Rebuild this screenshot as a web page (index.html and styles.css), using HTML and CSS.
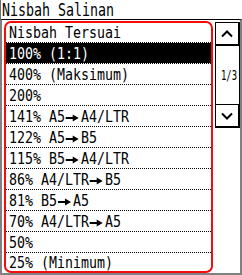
FILE: index.html
```html
<!DOCTYPE html>
<html>
<head>
<meta charset="utf-8">
<link rel="stylesheet" href="styles.css">
</head>
<body>
<div class="screen">
  <div class="title"><span class="tt">Nisbah Salinan</span></div>
  <div class="main">
    <div class="list">
      <div class="row head"><span class="t">Nisbah Tersuai</span></div>
      <div class="row sel"><span class="t">100% (1:1)</span></div>
      <div class="row"><span class="t">400% (Maksimum)</span></div>
      <div class="row"><span class="t">200%</span></div>
      <div class="row"><span class="t">141% A5<svg class="arr" width="18.7" height="8" viewBox="0 0 16 8" preserveAspectRatio="none"><path d="M1 3h8v2H1z M8 0.5l6 3.5-6 3.5z"/></svg>A4/LTR</span></div>
      <div class="row"><span class="t">122% A5<svg class="arr" width="18.7" height="8" viewBox="0 0 16 8" preserveAspectRatio="none"><path d="M1 3h8v2H1z M8 0.5l6 3.5-6 3.5z"/></svg>B5</span></div>
      <div class="row"><span class="t">115% B5<svg class="arr" width="18.7" height="8" viewBox="0 0 16 8" preserveAspectRatio="none"><path d="M1 3h8v2H1z M8 0.5l6 3.5-6 3.5z"/></svg>A4/LTR</span></div>
      <div class="row"><span class="t">86% A4/LTR<svg class="arr" width="18.7" height="8" viewBox="0 0 16 8" preserveAspectRatio="none"><path d="M1 3h8v2H1z M8 0.5l6 3.5-6 3.5z"/></svg>B5</span></div>
      <div class="row"><span class="t">81% B5<svg class="arr" width="18.7" height="8" viewBox="0 0 16 8" preserveAspectRatio="none"><path d="M1 3h8v2H1z M8 0.5l6 3.5-6 3.5z"/></svg>A5</span></div>
      <div class="row"><span class="t">70% A4/LTR<svg class="arr" width="18.7" height="8" viewBox="0 0 16 8" preserveAspectRatio="none"><path d="M1 3h8v2H1z M8 0.5l6 3.5-6 3.5z"/></svg>A5</span></div>
      <div class="row"><span class="t">50%</span></div>
      <div class="row last"><span class="t">25% (Minimum)</span></div>
    </div>
    <div class="scroll">
      <div class="btn"><svg width="12" height="8" viewBox="0 0 12 8"><path d="M1 6.5 6 1.5l5 5" fill="none" stroke="#000" stroke-width="2"/></svg></div>
      <div class="track"><span class="pg">1/3</span></div>
      <div class="btn"><svg width="12" height="8" viewBox="0 0 12 8"><path d="M1 1.5 6 6.5l5-5" fill="none" stroke="#000" stroke-width="2"/></svg></div>
    </div>
  </div>
</div>
</body>
</html>
```

FILE: styles.css
```css
html, body {
  margin: 0;
  padding: 0;
  background: #fff;
}
.screen {
  width: 242px;
  height: 275px;
  display: flex;
  flex-direction: column;
  font-family: "DejaVu Sans Mono", monospace;
  font-size: 15.5px;
  color: #000;
  overflow: hidden;
}
.title {
  height: 19px;
  box-sizing: border-box;
  border-left: 1px solid #6e6e6e;
  padding-left: 1px;
  line-height: 21px;
  font-size: 17px;
  white-space: nowrap;
  overflow: hidden;
}
.tt {
  display: inline-block;
  transform: scaleX(0.782);
  transform-origin: 0 0;
}
.main {
  flex: 1;
  display: flex;
  gap: 2px;
  border-top: 1px solid #000;
  border-left: 2px solid #808080;
  border-right: 2px solid #808080;
  border-bottom: 2px solid #808080;
  padding: 1px 0 0 2px;
  box-sizing: border-box;
}
.list {
  width: 209px;
  height: 252px;
  box-sizing: border-box;
  border: 2px solid #f20c0c;
  border-radius: 7px;
  display: flex;
  flex-direction: column;
  overflow: hidden;
}
.row {
  height: 21px;
  flex: none;
  box-sizing: border-box;
  border-bottom: 1px dotted #000;
  padding: 1px 0 0 3px;
  display: flex;
  align-items: center;
  white-space: nowrap;
}
.t {
  display: inline-block;
  transform: scaleX(0.857);
  transform-origin: 0 50%;
}
.row.head {
  height: 20px;
}
.row.sel {
  background: #000;
  background-clip: padding-box;
  color: #fff;
}
.row.last {
  border-bottom: 0;
  flex: 1;
}
.arr {
  vertical-align: 0;
}
.scroll {
  width: 25px;
  display: flex;
  flex-direction: column;
  padding-top: 1px;
}
.btn {
  height: 24px;
  box-sizing: border-box;
  border: 1px solid #000;
  border-right-width: 2px;
  border-bottom-width: 2px;
  display: flex;
  align-items: center;
  justify-content: center;
}
.track {
  height: 58px;
  box-sizing: border-box;
  border-left: 1px solid #000;
  border-right: 1px solid #000;
  display: flex;
  align-items: center;
  padding-left: 5px;
  font-size: 13.5px;
}
.pg {
  display: inline-block;
  transform: scaleX(0.66);
  transform-origin: 0 50%;
}
```
